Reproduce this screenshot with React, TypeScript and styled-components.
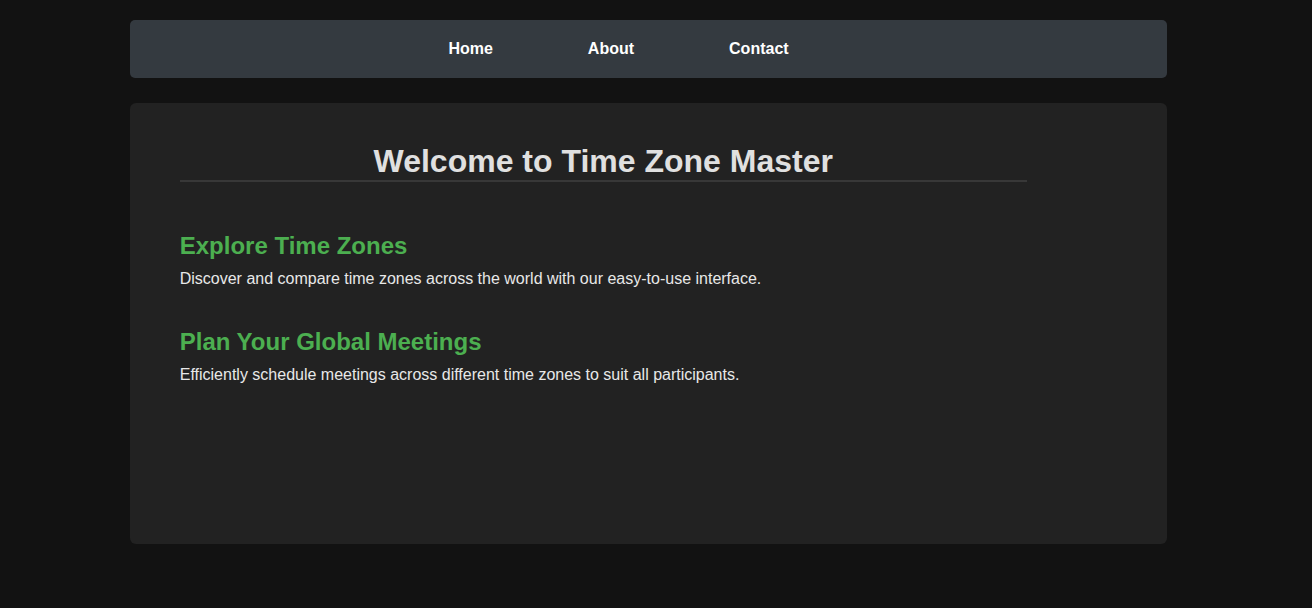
import React from "react";
import styled, { createGlobalStyle } from "styled-components";

const GlobalStyle = createGlobalStyle`
  html, body {
    margin: 0;
    padding: 0;
    background: #121212;
  }
  body {
    font-family: "Liberation Sans", Arial, Helvetica, sans-serif;
    color: #e0e0e0;
  }
  * { box-sizing: border-box; }
`;

const Page = styled.div`
  min-height: 1027px;
  padding: 20px 15px 0 0;
`;

const Container = styled.div`
  width: 80%;
  margin: 0 auto;
  display: flex;
  flex-direction: column;
  gap: 25px;
`;

const Nav = styled.nav`
  height: 58px;
  background: #343a40;
  border-radius: 5px;
  display: flex;
  align-items: center;
  justify-content: center;
  padding-right: 60px;
`;

const NavList = styled.ul`
  list-style: none;
  margin: 0;
  padding: 0;
  display: flex;
  gap: 95px;
`;

const NavLink = styled.a`
  color: #ffffff;
  font-weight: bold;
  font-size: 16px;
  text-decoration: none;
`;

const Main = styled.main`
  background: #222222;
  border-radius: 6px;
  min-height: 441px;
  padding: 40px 50px;
`;

const Title = styled.h1`
  max-width: 847px;
  margin: 0 0 50px;
  font-size: 32px;
  font-weight: bold;
  text-align: center;
  color: #e0e0e0;
  border-bottom: 2px solid #383838;
`;

const Section = styled.section`
  margin-bottom: 40px;
`;

const SectionTitle = styled.h2`
  margin: 0 0 10px;
  font-size: 24px;
  font-weight: bold;
  color: #4caf50;
`;

const Text = styled.p`
  margin: 0;
  font-size: 16px;
  color: #e8e8e8;
`;

const links = ["Home", "About", "Contact"];

const sections = [
  {
    title: "Explore Time Zones",
    text: "Discover and compare time zones across the world with our easy-to-use interface.",
  },
  {
    title: "Plan Your Global Meetings",
    text: "Efficiently schedule meetings across different time zones to suit all participants.",
  },
];

export default function App() {
  return (
    <>
      <GlobalStyle />
      <Page>
        <Container>
          <Nav>
            <NavList>
              {links.map((l) => (
                <li key={l}>
                  <NavLink href="#">{l}</NavLink>
                </li>
              ))}
            </NavList>
          </Nav>
          <Main>
            <Title>Welcome to Time Zone Master</Title>
            {sections.map((s) => (
              <Section key={s.title}>
                <SectionTitle>{s.title}</SectionTitle>
                <Text>{s.text}</Text>
              </Section>
            ))}
          </Main>
        </Container>
      </Page>
    </>
  );
}
